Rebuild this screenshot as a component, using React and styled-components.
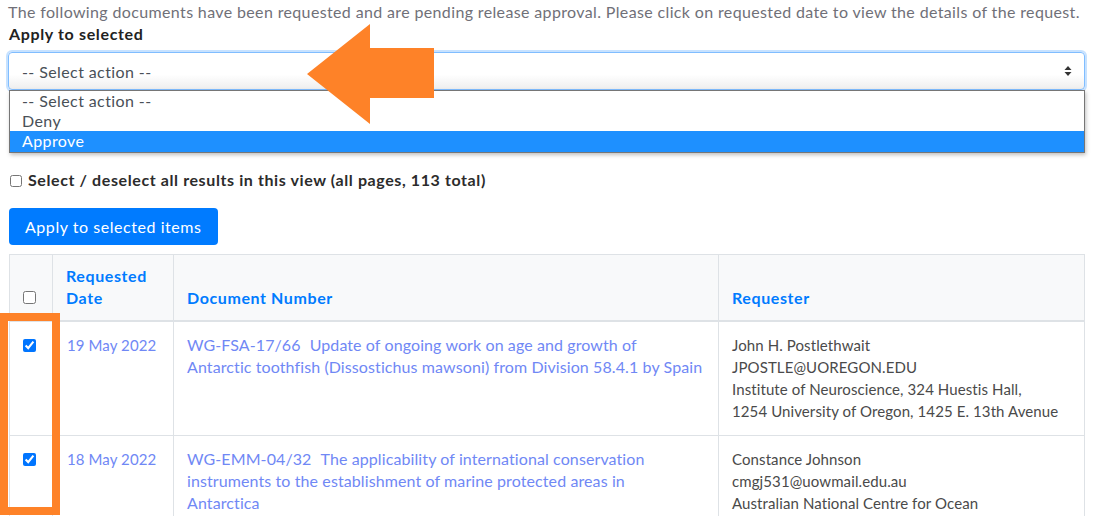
import styled, { createGlobalStyle } from "styled-components";

const GlobalStyle = createGlobalStyle`
  html, body {
    margin: 0;
    padding: 0;
    background: #ffffff;
  }
  body {
    font-family: "Lato", "Open Sans", sans-serif;
    color: #212529;
    overflow: hidden;
  }
`;

const options = ["-- Select action --", "Deny", "Approve"];

// lines are kept as they wrap on the original page
const rows = [
  {
    date: "19 May 2022",
    code: "WG-FSA-17/66",
    title: [
      "Update of ongoing work on age and growth of",
      "Antarctic toothfish (Dissostichus mawsoni) from Division 58.4.1 by Spain",
    ],
    requester: [
      "John H. Postlethwait",
      "JPOSTLE@UOREGON.EDU",
      "Institute of Neuroscience, 324 Huestis Hall,",
      "1254 University of Oregon, 1425 E. 13th Avenue",
    ],
  },
  {
    date: "18 May 2022",
    code: "WG-EMM-04/32",
    title: [
      "The applicability of international conservation",
      "instruments to the establishment of marine protected areas in",
      "Antarctica",
    ],
    requester: [
      "Constance Johnson",
      "cmgj531@uowmail.edu.au",
      "Australian National Centre for Ocean",
      "Resources and Security",
    ],
  },
];

const App = () => {
  return (
    <Page>
      <GlobalStyle />
      <Intro>
        The following documents have been requested and are pending release
        approval. Please click on requested date to view the details of the
        request.
      </Intro>
      <Label>Apply to selected</Label>
      <SelectWrap>
        <SelectBox>
          <span>-- Select action --</span>
          <Caret viewBox="0 0 8 12">
            <path d="M4 1 L7.5 5 L0.5 5 Z" fill="#333" />
            <path d="M4 11 L7.5 7 L0.5 7 Z" fill="#333" />
          </Caret>
        </SelectBox>
        <ListBox>
          {options.map(o => (
            <Option key={o} selected={o === "Approve"}>
              {o}
            </Option>
          ))}
        </ListBox>
        <Arrow viewBox="0 0 128 100">
          <polygon
            points="0,50 63,0 63,24 127,24 127,74 63,74 63,100"
            fill="#fe8228"
          />
        </Arrow>
      </SelectWrap>

      <SelectAll>
        <input type="checkbox" />
        <span>Select / deselect all results in this view (all pages, 113 total)</span>
      </SelectAll>

      <ApplyButton>Apply to selected items</ApplyButton>

      <TableWrap>
        <Table>
          <colgroup>
            <col style={{ width: "43px" }} />
            <col style={{ width: "121px" }} />
            <col style={{ width: "545px" }} />
            <col />
          </colgroup>
          <thead>
            <tr>
              <Th>
                <input type="checkbox" />
              </Th>
              <Th>
                <a>Requested Date</a>
              </Th>
              <Th>
                <a>Document Number</a>
              </Th>
              <Th>
                <a>Requester</a>
              </Th>
            </tr>
          </thead>
          <tbody>
            {rows.map(r => (
              <tr key={r.code}>
                <Td>
                  <input type="checkbox" defaultChecked />
                </Td>
                <Td>
                  <DateLink>{r.date}</DateLink>
                </Td>
                <Td>
                  <DocLink>
                    {r.code}
                    <Gap />
                    {r.title.map((line, i) => (
                      <span key={line}>
                        {i > 0 && <br />}
                        {line}
                      </span>
                    ))}
                  </DocLink>
                </Td>
                <Td>
                  {r.requester.map(line => (
                    <Line key={line}>{line}</Line>
                  ))}
                </Td>
              </tr>
            ))}
          </tbody>
        </Table>
        <Highlight />
      </TableWrap>
    </Page>
  );
};

const Page = styled.div`
  width: 1077px;
  padding: 0 0 0 8px;
  position: relative;
`;

const Intro = styled.p`
  margin: 0;
  padding-top: 2px;
  font-size: 16px;
  line-height: 20px;
  color: #707078;
  font-weight: 400;
  letter-spacing: 0.36px;
  white-space: nowrap;
`;

const Label = styled.div`
  font-size: 16px;
  line-height: 22px;
  font-weight: 700;
  color: #222;
  margin-top: 1px;
  margin-left: 1px;
  letter-spacing: 0.65px;
`;

const SelectWrap = styled.div`
  position: relative;
  margin-top: 7px;
`;

const SelectBox = styled.div`
  height: 38px;
  box-sizing: border-box;
  border: 1px solid #80bdff;
  border-radius: 4px;
  box-shadow: 0 0 0 2px rgba(0, 123, 255, 0.22);
  background: linear-gradient(#fff 60%, #eeeeee);
  display: flex;
  align-items: center;
  justify-content: space-between;
  padding: 0 12px 0 13px;
  font-size: 16px;
  color: #495057;
  letter-spacing: 0.4px;
`;

const Caret = styled.svg`
  width: 8px;
  height: 12px;
`;

const ListBox = styled.div`
  position: absolute;
  top: 38px;
  left: 1px;
  right: 0;
  background: #fff;
  border: 1px solid #767676;
  box-shadow: 1px 2px 4px rgba(0, 0, 0, 0.25);
  z-index: 2;
`;

const Option = styled.div`
  height: 20px;
  line-height: 20px;
  padding-left: 12px;
  font-size: 16px;
  letter-spacing: 0.4px;
  color: ${p => (p.selected ? "#ffffff" : "#495057")};
  background: ${p => (p.selected ? "#1e90ff" : "transparent")};

  &:last-child {
    height: 21px;
  }
`;

const Arrow = styled.svg`
  position: absolute;
  left: 299px;
  top: -28px;
  width: 128px;
  height: 100px;
  z-index: 3;
`;

const SelectAll = styled.label`
  display: flex;
  align-items: center;
  gap: 6px;
  margin-top: 80px;
  font-size: 16px;
  font-weight: 700;
  color: #2c2c2c;
  letter-spacing: 0.6px;

  input {
    margin: 2px 0 0 2px;
    width: 12px;
    height: 12px;
  }
`;

const ApplyButton = styled.button`
  display: block;
  margin-top: 19px;
  margin-left: 1px;
  height: 37px;
  padding: 0 16px;
  border: none;
  border-radius: 4px;
  background: #007bff;
  color: #fff;
  font-family: inherit;
  font-size: 16px;
  letter-spacing: 0.55px;
`;

const TableWrap = styled.div`
  position: relative;
  margin-top: 9px;
  margin-left: 1px;
`;

const Table = styled.table`
  width: 1076px;
  border-collapse: collapse;
  table-layout: fixed;
  font-size: 16px;
  line-height: 22px;
`;

const Th = styled.th`
  background: #f8f9fa;
  border: 1px solid #dee2e6;
  border-bottom: 2px solid #dee2e6;
  padding: 10px 13px 11px 13px;
  text-align: left;
  vertical-align: bottom;
  font-weight: 700;
  letter-spacing: 0.6px;

  a {
    color: #007bff;
  }

  input {
    margin: 0 0 5px 0;
    width: 13px;
    height: 13px;
  }
`;

const Td = styled.td`
  border: 1px solid #dee2e6;
  padding: 12px 13px 13px 13px;
  vertical-align: top;
  color: #4a4a4a;
  white-space: nowrap;
  overflow: hidden;

  input {
    margin: 5px 0 0 0;
    width: 13px;
    height: 13px;
  }

  &:nth-child(2) {
    padding-left: 14px;
  }
`;

const DateLink = styled.a`
  color: #7088f5;
  font-size: 15px;
  letter-spacing: 0.1px;
`;

const DocLink = styled.a`
  color: #7088f5;
  letter-spacing: 0.1px;
`;

const Line = styled.div`
  font-size: 15px;
  letter-spacing: 0.1px;
`;

const Gap = styled.span`
  display: inline-block;
  width: 9px;
`;

const Highlight = styled.div`
  position: absolute;
  left: -9px;
  top: 59px;
  width: 44px;
  height: 186px;
  border: 8px solid #fe8228;
  pointer-events: none;
`;

export default App;
